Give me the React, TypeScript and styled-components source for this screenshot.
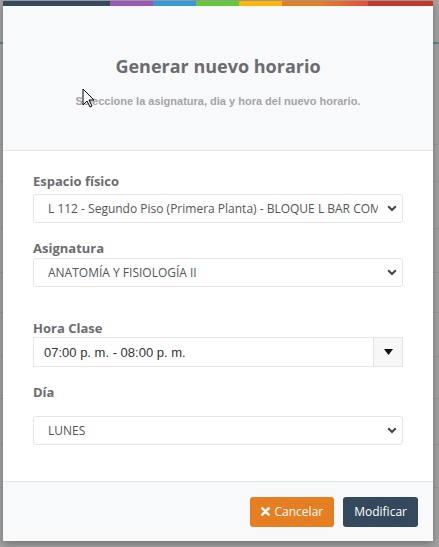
import React from "react";
import styled, { createGlobalStyle } from "styled-components";

const GlobalStyle = createGlobalStyle`
  html, body {
    margin: 0;
    padding: 0;
  }
  body {
    background: #a3a3a3;
    font-family: "Open Sans", "Liberation Sans", sans-serif;
  }
`;

// colours of the strip across the top of the modal
const stripe = [
  { w: 107, c: "#34495e" },
  { w: 43, c: "#9b59b6" },
  { w: 43, c: "#3498db" },
  { w: 43, c: "#62cb31" },
  { w: 43, c: "#ffb606" },
  { w: 86, c: "linear-gradient(to right, #e67e22 45%, #e74c3c)" },
  { w: 65, c: "#c0392b" },
];

const ChevronDown = () => (
  <svg width="10" height="7" viewBox="0 0 10 7">
    <path d="M1.2 1.3 5 5 8.8 1.3" fill="none" stroke="#444" strokeWidth="2" />
  </svg>
);

const SelectBox = ({ value }: { value: string }) => (
  <Select>
    <span>{value}</span>
    <ChevronDown />
  </Select>
);

export default function App() {
  return (
    <>
      <GlobalStyle />
      <Page>
        <Backdrop>
          <RowLine $top={42} $blue />
          <RowLine $top={144} />
          <RowLine $top={181} />
          <RowLine $top={228} />
          <RowLine $top={272} />
          <RowLine $top={312} />
          <RowLine $top={356} />
          <RowLine $top={398} />
          <RowLine $top={444} />
          <RowLine $top={487} />
        </Backdrop>
        <Modal>
          <Stripe>
            {stripe.map((s, i) => (
              <Segment key={i} style={{ width: s.w, background: s.c }} />
            ))}
          </Stripe>
          <Header>
            <Title>Generar nuevo horario</Title>
            <Subtitle>Seleccione la asignatura, dia y hora del nuevo horario.</Subtitle>
          </Header>
          <Body>
            <Field>
              <Label>Espacio físico</Label>
              <SelectBox value="L 112 - Segundo Piso (Primera Planta) - BLOQUE L BAR COM" />
            </Field>
            <Field $mt={16} $gap={1}>
              <Label>Asignatura</Label>
              <SelectBox value="ANATOMÍA Y FISIOLOGÍA II" />
            </Field>
            <Field $mt={32} $gap={0}>
              <Label>Hora Clase</Label>
              <InputGroup>
                <TimeText>07:00 p. m. - 08:00 p. m.</TimeText>
                <Addon>
                  <svg width="9" height="6" viewBox="0 0 9 6">
                    <path d="M0 0h9L4.5 6z" fill="#111" />
                  </svg>
                </Addon>
              </InputGroup>
            </Field>
            <Field $mt={16} $gap={15}>
              <Label>Día</Label>
              <SelectBox value="LUNES" />
            </Field>
          </Body>
          <Footer>
            <Button $bg="#e67e22">
              <svg width="9" height="9" viewBox="0 0 10 10">
                <path d="M1.5 1.5 8.5 8.5M8.5 1.5 1.5 8.5" stroke="#fff" strokeWidth="2.8" strokeLinecap="round" />
              </svg>
              Cancelar
            </Button>
            <Button $bg="#34495e">Modificar</Button>
          </Footer>
        </Modal>
        <Cursor width="13" height="20" viewBox="0 0 13 20">
          <path d="M1 1v16l4-4 3 6 2-1-3-6h5z" fill="#fff" stroke="#000" strokeWidth="1" />
        </Cursor>
      </Page>
    </>
  );
}

const Page = styled.div`
  position: relative;
  width: 439px;
  height: 547px;
  overflow: hidden;
  padding: 1px 6px 0 3px;
  box-sizing: border-box;
`;

const Backdrop = styled.div`
  position: absolute;
  inset: 0;
`;

const RowLine = styled.div<{ $top: number; $blue?: boolean }>`
  position: absolute;
  left: 0;
  right: 0;
  top: ${(p) => p.$top}px;
  height: ${(p) => (p.$blue ? 2 : 1)}px;
  background: ${(p) => (p.$blue ? "#5f7f95" : "#979797")};
`;

const Modal = styled.div`
  position: relative;
  width: 430px;
  height: 540px;
  background: #fff;
  box-shadow: 0 3px 8px rgba(0, 0, 0, 0.3);
  display: flex;
  flex-direction: column;
`;

const Stripe = styled.div`
  display: flex;
  height: 5px;
`;

const Segment = styled.div`
  height: 100%;
`;

const Header = styled.div`
  background: #f8f9fb;
  height: 145px;
  box-sizing: border-box;
  border-bottom: 1px solid #e4e5e7;
  display: flex;
  flex-direction: column;
  align-items: center;
  padding-top: 48px;
`;

const Title = styled.h4`
  margin: 0;
  font-family: "Open Sans", sans-serif;
  font-weight: 700;
  font-size: 18px;
  line-height: 24px;
  color: #6a6c6f;
`;

const Subtitle = styled.p`
  margin: 17px 0 0;
  font-family: "Liberation Sans", Arial, sans-serif;
  font-weight: 700;
  font-size: 11px;
  color: #a2a4a7;
`;

const Body = styled.div`
  flex: 1;
  padding: 21px 30px 0 30px;
  box-sizing: border-box;
`;

const Field = styled.div<{ $mt?: number; $gap?: number }>`
  display: flex;
  flex-direction: column;
  gap: ${(p) => p.$gap ?? 4}px;
  margin-top: ${(p) => p.$mt ?? 0}px;
`;

const Label = styled.label`
  font-family: "Open Sans", sans-serif;
  font-weight: 700;
  font-size: 13px;
  line-height: 18px;
  color: #6a6c6f;
`;

const Select = styled.div`
  height: 29px;
  box-sizing: border-box;
  border: 1px solid #e4e5e7;
  border-radius: 3px;
  display: flex;
  align-items: center;
  justify-content: space-between;
  padding: 0 5px 0 14px;
  font-family: "Open Sans", sans-serif;
  font-size: 12px;
  color: #555;
  span {
    white-space: nowrap;
    overflow: hidden;
    width: 330px;
  }
`;

const InputGroup = styled.div`
  height: 30px;
  box-sizing: border-box;
  border: 1px solid #e4e5e7;
  display: flex;
`;

const TimeText = styled.div`
  flex: 1;
  display: flex;
  align-items: center;
  padding-left: 10px;
  font-family: "Liberation Sans", Arial, sans-serif;
  font-size: 13px;
  color: #333;
`;

const Addon = styled.div`
  width: 28px;
  border-left: 1px solid #e4e5e7;
  background: #f7f7f7;
  display: flex;
  align-items: center;
  justify-content: center;
`;

const Footer = styled.div`
  height: 60px;
  box-sizing: border-box;
  background: #f8f9fb;
  border-top: 1px solid #e4e5e7;
  display: flex;
  align-items: center;
  justify-content: flex-end;
  gap: 9px;
  padding: 0 15px 0 0;
`;

const Button = styled.button<{ $bg: string }>`
  height: 30px;
  border: none;
  border-radius: 3px;
  background: ${(p) => p.$bg};
  color: #fff;
  font-family: "Open Sans", sans-serif;
  font-size: 12px;
  padding: 0 11px;
  display: flex;
  align-items: center;
  gap: 5px;
  cursor: pointer;
`;

const Cursor = styled.svg`
  position: absolute;
  left: 82px;
  top: 88px;
`;
